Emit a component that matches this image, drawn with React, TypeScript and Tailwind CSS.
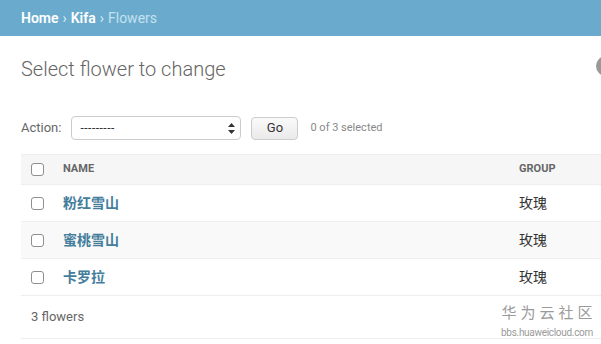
const rows = [
  { name: '粉红雪山', group: '玫瑰' },
  { name: '蜜桃雪山', group: '玫瑰' },
  { name: '卡罗拉', group: '玫瑰' },
];

const font = "font-['Roboto','Noto_Sans_CJK_SC',sans-serif]";

const Check = () => (
  <span className="block w-[13px] h-[13px] rounded-[3px] border border-[#8f8f8f] bg-white" />
);

export default function App() {
  return (
    <div className={`relative w-[601px] h-[344px] overflow-hidden bg-white ${font}`}>
      <div className="h-[36px] bg-[#6aabcd] flex items-center pl-[21px] text-[14px] text-[#c4e1ef]">
        <span className="font-semibold text-white">Home</span>
        <span className="mx-[4px] text-[#d9ecf5]">›</span>
        <span className="font-semibold text-white">Kifa</span>
        <span className="mx-[4px] text-[#d9ecf5]">›</span>
        <span>Flowers</span>
      </div>

      <div className="pl-[21px] w-[760px]">
        <h1 className="pt-[21px] text-[20px] leading-[24px] font-light text-[#666]">
          Select flower to change
        </h1>

        <div className="mt-[35px] flex items-center h-[24px] text-[13px] text-[#666]">
          <span>Action:</span>
          <div className="ml-[10px] w-[170px] h-[24px] border border-[#ccc] rounded-[4px] flex items-center justify-between pl-[8px] pr-[5px] bg-white">
            <span className="text-[#333] text-[12px] tracking-[0.5px]">---------</span>
            <svg width="7" height="11" viewBox="0 0 7 11">
              <path d="M3.5 0 L7 4 L0 4 Z" fill="#333" />
              <path d="M0 7 L7 7 L3.5 11 Z" fill="#333" />
            </svg>
          </div>
          <div className="ml-[10px] w-[47px] h-[23px] border border-[#ccc] rounded-[4px] bg-gradient-to-b from-[#fafafa] to-[#eaeaea] flex items-center justify-center text-[#333] text-[13px]">
            Go
          </div>
          <span className="ml-[12px] text-[11px] text-[#888]">0 of 3 selected</span>
        </div>

        <div className="mt-[14px]">
          <div className="h-[31px] bg-[#f6f6f6] border-t border-[#eee] border-b border-b-[#eee] flex items-center text-[11px] font-bold text-[#666]">
            <div className="w-[42px] pl-[10px]"><Check /></div>
            <div className="w-[456px]">NAME</div>
            <div>GROUP</div>
          </div>
          {rows.map((r, i) => (
            <div
              key={r.name}
              className={`h-[37px] flex items-center border-b border-[#eee] text-[14px] ${i === 1 ? 'bg-[#f9f9f9]' : 'bg-white'}`}
            >
              <div className="w-[42px] pl-[10px]"><Check /></div>
              <div className="w-[456px] font-bold text-[#447e9b]">{r.name}</div>
              <div className="text-[#333]">{r.group}</div>
            </div>
          ))}
          <div className="h-[43px] flex items-center pl-[10px] border-b border-[#eee] text-[13px] text-[#666]">
            3 flowers
          </div>
        </div>
      </div>

      <div className="absolute left-[596px] top-[56px] w-[40px] h-[20px] rounded-full bg-[#999]" />

      <div className="absolute left-[500px] top-[303px] w-[94px] flex flex-col items-center whitespace-nowrap text-[#9a9a9a] font-['Noto_Sans_CJK_SC',sans-serif]">
        <span className="text-[15px] leading-[18px] tracking-[4px] pl-[4px]">华为云社区</span>
        <span className="text-[10px] leading-[12px] tracking-[-0.3px] mt-[6px] font-['Roboto',sans-serif]">bbs.huaweicloud.com</span>
      </div>
    </div>
  );
}
